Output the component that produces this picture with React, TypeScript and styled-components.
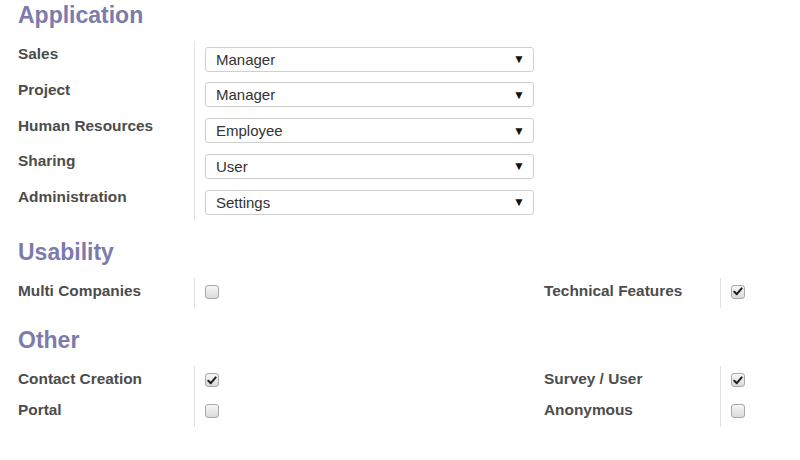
import React from "react";
import styled, { createGlobalStyle } from "styled-components";

const Global = createGlobalStyle`
  html, body { margin: 0; padding: 0; background: #ffffff; }
  body { font-family: "Liberation Sans", Arial, sans-serif; }
`;

const Sheet = styled.div`
  padding: 0 0 0 18px;
  width: 100%;
  box-sizing: border-box;
  overflow: hidden;
`;

const Title = styled.h2<{ $first?: boolean }>`
  margin: ${(p) => (p.$first ? "0" : "17px")} 0 11px;
  font-size: 23px;
  line-height: 30px;
  font-weight: bold;
  color: #7c7bad;
`;

const Columns = styled.div`
  display: grid;
  grid-template-columns: 526px 526px;
`;

const Group = styled.div<{ $rowH: number }>`
  display: grid;
  grid-template-columns: 176px 350px;
  grid-auto-rows: ${(p) => p.$rowH}px;
`;

const Label = styled.div`
  font-size: 15.4px;
  line-height: 20px;
  font-weight: bold;
  color: #4c4c4c;
  padding-top: 3px;
  white-space: nowrap;
`;

const Value = styled.div`
  border-left: 1px solid #e2e2e2;
  padding: 0 10px;
  display: flex;
  align-items: flex-start;
`;

const SelectBox = styled.div`
  margin-top: 5.5px;
  flex: 1;
  height: 25px;
  box-sizing: border-box;
  border: 1px solid #cfcfcf;
  border-radius: 3px;
  background: #fff;
  display: flex;
  align-items: center;
  justify-content: space-between;
  padding: 0 8px 0 10px;
  font-size: 15px;
  color: #333;
`;

const Arrow = styled.span`
  font-size: 12px;
  color: #111;
  line-height: 1;
`;

const Box = styled.span`
  margin-top: 7px;
  width: 14px;
  height: 14px;
  box-sizing: border-box;
  border: 1px solid #a9a9a9;
  border-radius: 3px;
  background: linear-gradient(#f6f6f6, #dadada);
  display: flex;
  align-items: center;
  justify-content: center;
`;

function Select({ value }: { value: string }) {
  return (
    <SelectBox>
      <span>{value}</span>
      <Arrow>▼</Arrow>
    </SelectBox>
  );
}

function Check({ checked }: { checked?: boolean }) {
  return (
    <Box>
      {checked && (
        <svg width="10" height="9" viewBox="0 0 10 9">
          <path d="M1.3 4.8 L3.8 7.2 L8.7 1.4" fill="none" stroke="#1e1e1e" strokeWidth="2" strokeLinecap="round" strokeLinejoin="round" />
        </svg>
      )}
    </Box>
  );
}

const apps = [
  ["Sales", "Manager"],
  ["Project", "Manager"],
  ["Human Resources", "Employee"],
  ["Sharing", "User"],
  ["Administration", "Settings"],
];

type Flag = [string, boolean];

function CheckGroup({ items }: { items: Flag[] }) {
  return (
    <Group $rowH={30.5}>
      {items.map(([l, c]) => (
        <React.Fragment key={l}>
          <Label>{l}</Label>
          <Value>
            <Check checked={c} />
          </Value>
        </React.Fragment>
      ))}
    </Group>
  );
}

export default function App() {
  return (
    <>
      <Global />
      <Sheet>
        <Title $first>Application</Title>
        <Columns>
          <Group $rowH={35.75}>
            {apps.map(([l, v]) => (
              <React.Fragment key={l}>
                <Label>{l}</Label>
                <Value>
                  <Select value={v} />
                </Value>
              </React.Fragment>
            ))}
          </Group>
        </Columns>
        <Title>Usability</Title>
        <Columns>
          <CheckGroup items={[["Multi Companies", false]]} />
          <CheckGroup items={[["Technical Features", true]]} />
        </Columns>
        <Title>Other</Title>
        <Columns>
          <CheckGroup items={[["Contact Creation", true], ["Portal", false]]} />
          <CheckGroup items={[["Survey / User", true], ["Anonymous", false]]} />
        </Columns>
      </Sheet>
    </>
  );
}
